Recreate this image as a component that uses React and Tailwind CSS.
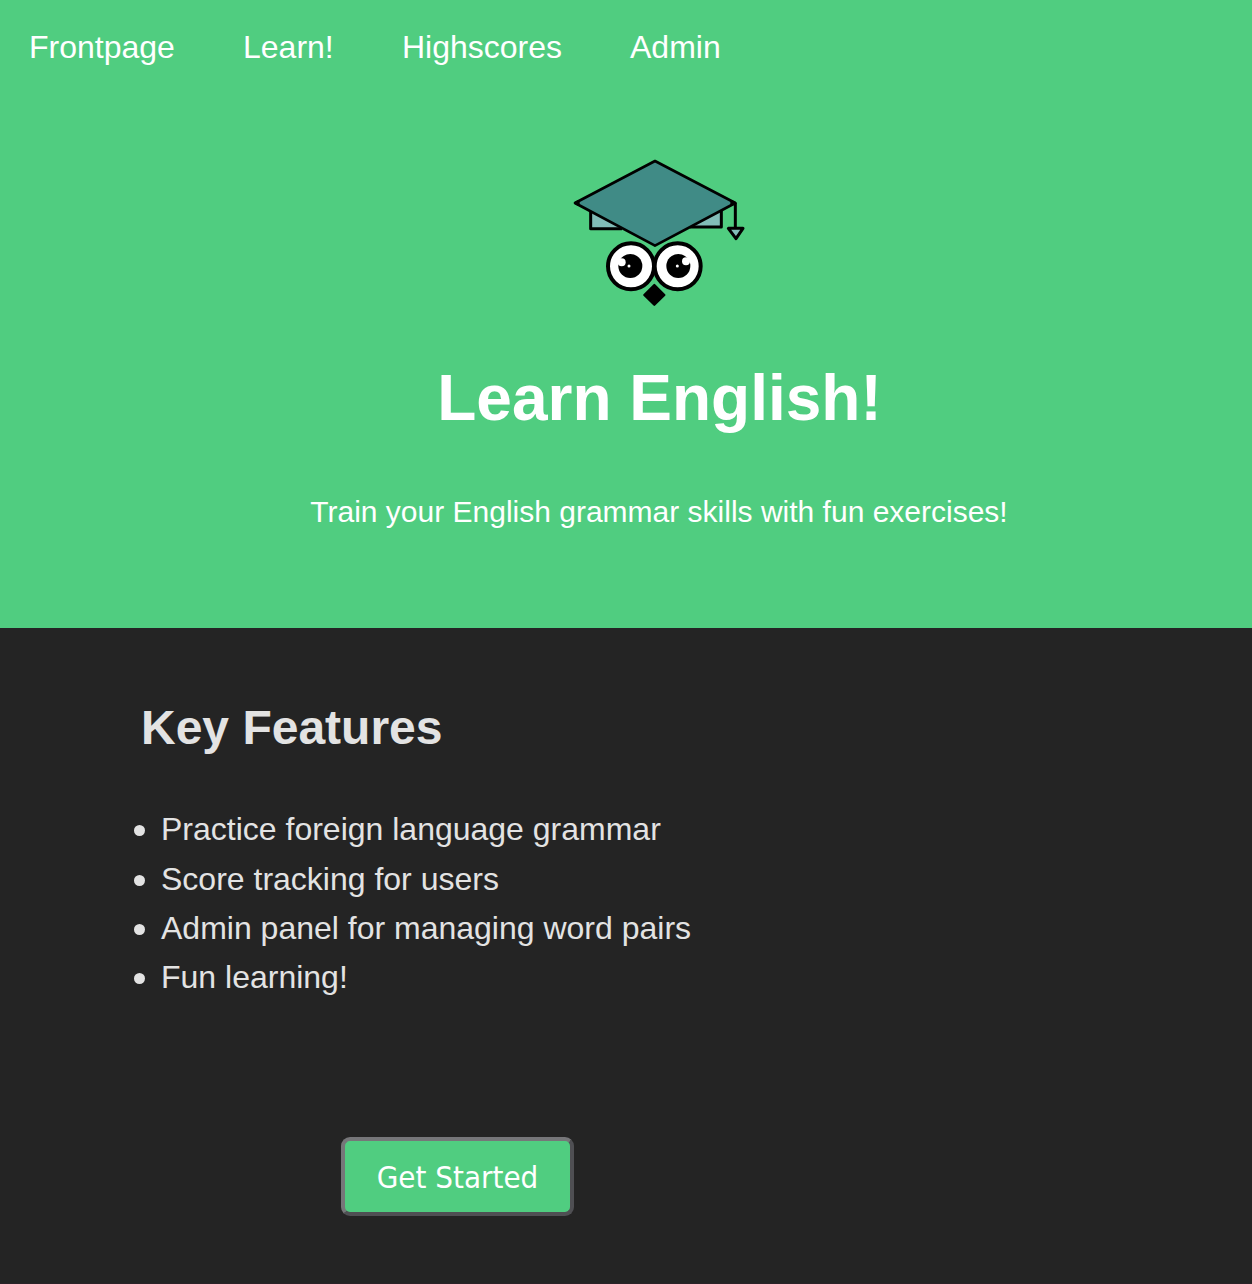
const links = [
  { label: 'Frontpage', space: 'w-[214px]' },
  { label: 'Learn!', space: 'w-[159px]' },
  { label: 'Highscores', space: 'w-[228px]' },
  { label: 'Admin', space: '' },
];

const features = [
  'Practice foreign language grammar',
  'Score tracking for users',
  'Admin panel for managing word pairs',
  'Fun learning!',
];

function OwlLogo() {
  return (
    <svg width="200" height="165" viewBox="0 0 600 495" stroke="#000" strokeLinejoin="round">
      <path d="M92 180V236H190ZM395 231H484V180Z" fill="#82bdb8" stroke="none" />
      <path d="M92 182V236H186M390 231H484V182" fill="none" strokeWidth="9" />
      <path d="M45 159L285 33L526 159L285 287Z" fill="#408b86" strokeWidth="8" />
      <path d="M45 159L56 153V165ZM514 153L526 159L514 165Z" strokeWidth="6" />
      <path d="M526 159V233" fill="none" strokeWidth="9" />
      <path d="M505 235H549L528 266Z" fill="#82bdb8" strokeWidth="9" />
      <circle cx="213" cy="349" r="69" fill="#fff" strokeWidth="12" />
      <circle cx="353" cy="349" r="69" fill="#fff" strokeWidth="12" />
      <g stroke="none">
        <circle cx="211" cy="348" r="36" />
        <circle cx="355" cy="348" r="36" />
        <g fill="#fff">
          <circle cx="185" cy="337" r="12" />
          <circle cx="378" cy="334" r="12" />
          <circle cx="207" cy="348" r="4.5" />
          <circle cx="352" cy="348" r="4.5" />
        </g>
      </g>
      <path d="M283 405L313 435L283 464L253 435Z" strokeWidth="7" />
    </svg>
  );
}

export default function App() {
  return (
    <div className="h-[1284px] w-full overflow-hidden border-b-[1px] border-[#2a2228] bg-[#242424] font-['Liberation_Sans',Arial,sans-serif] text-[32px] text-[#e3e3e3]">
      <header className="h-[628px] bg-[#50cd80] text-white">
        <nav className="flex h-[95px] pl-[29px] pt-[22px] leading-[50px]">
          {links.map((l) => (
            <a key={l.label} className={l.space}>{l.label}</a>
          ))}
        </nav>
        <div className="flex w-[1318px] flex-col items-center pt-[55px]">
          <div className="pl-[2px]"><OwlLogo /></div>
          <h1 className="mt-[47px] pl-px text-[64px] leading-[72px] font-bold">Learn English!</h1>
          <p className="mt-[53px] whitespace-nowrap text-[30px] leading-[50px]">
            Train your English grammar skills with fun exercises!
          </p>
        </div>
      </header>
      <main>
        <h2 className="ml-[141px] pt-[72px] text-[48px] leading-[56px] font-bold">Key Features</h2>
        <ul className="mt-[49px] ml-[134px]">
          {features.map((f) => (
            <li key={f} className="flex h-[49.4px] items-center gap-[16px]">
              <span className="mt-[2px] size-[11px] rounded-full bg-[#e3e3e3]" />
              <span className="leading-[49px]">{f}</span>
            </li>
          ))}
        </ul>
        <button className="mt-[134px] ml-[341px] flex h-[79px] w-[233px] items-center justify-center rounded-[9px] border-4 border-t-[#767679] border-l-[#767679] border-r-[#4f4f53] border-b-[#4f4f53] bg-[#50cd80] pt-[2px] font-['DejaVu_Sans_Condensed','DejaVu_Sans',sans-serif] text-[31px] [font-stretch:condensed] text-white">
          Get Started
        </button>
      </main>
    </div>
  );
}
